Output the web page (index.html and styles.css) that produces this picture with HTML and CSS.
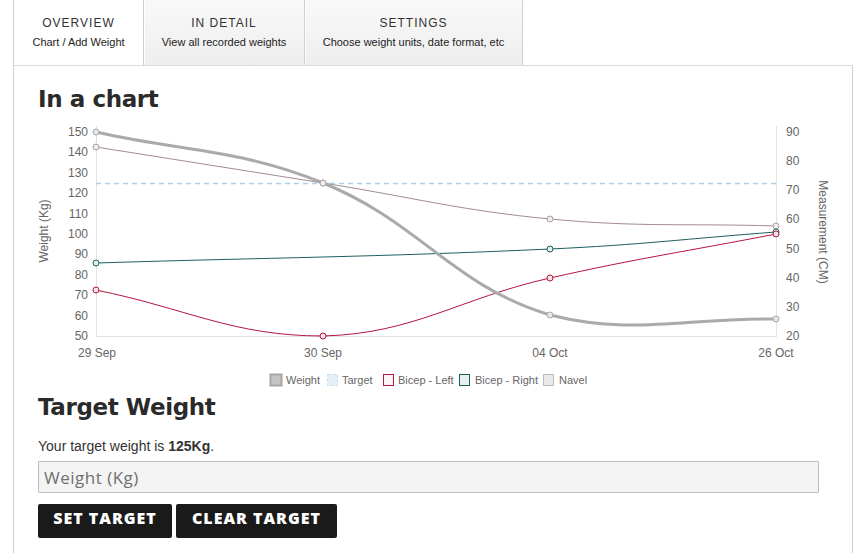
FILE: index.html
```html
<!DOCTYPE html>
<html lang="en">
<head>
  <meta charset="UTF-8">
  <title>Weight Tracker</title>
  <meta name="viewport" content="width=device-width, initial-scale=1.0">
  <link rel="stylesheet" href="styles.css">
</head>
<body>
  <div class="tabs">
    <div class="tab active">
      <div class="tab-title">OVERVIEW</div>
      <div class="tab-sub">Chart / Add Weight</div>
    </div>
    <div class="tab">
      <div class="tab-title">IN DETAIL</div>
      <div class="tab-sub">View all recorded weights</div>
    </div>
    <div class="tab wide">
      <div class="tab-title">SETTINGS</div>
      <div class="tab-sub">Choose weight units, date format, etc</div>
    </div>
  </div>

  <div class="panel">
    <h2>In a chart</h2>

    <svg class="chart" width="838" height="280" viewBox="14 113 838 280">
      <!-- axes -->
      <g stroke="#e2e2e2" stroke-width="1" fill="none">
        <line x1="96.5" y1="126" x2="96.5" y2="336.5"/>
        <line x1="776.5" y1="126" x2="776.5" y2="336.5"/>
        <line x1="96" y1="336.5" x2="777" y2="336.5"/>
      </g>

      <g class="tick" text-anchor="end">
        <text x="88" y="136">150</text>
        <text x="88" y="156.4">140</text>
        <text x="88" y="176.8">130</text>
        <text x="88" y="197.2">120</text>
        <text x="88" y="217.6">110</text>
        <text x="88" y="238">100</text>
        <text x="88" y="258.4">90</text>
        <text x="88" y="278.8">80</text>
        <text x="88" y="299.2">70</text>
        <text x="88" y="319.6">60</text>
        <text x="88" y="340">50</text>
      </g>
      <g class="tick" text-anchor="start">
        <text x="786" y="136">90</text>
        <text x="786" y="165.1">80</text>
        <text x="786" y="194.3">70</text>
        <text x="786" y="223.4">60</text>
        <text x="786" y="252.6">50</text>
        <text x="786" y="281.7">40</text>
        <text x="786" y="310.9">30</text>
        <text x="786" y="340">20</text>
      </g>
      <g class="tick" text-anchor="middle">
        <text x="97" y="357">29 Sep</text>
        <text x="323" y="357">30 Sep</text>
        <text x="550" y="357">04 Oct</text>
        <text x="776" y="357">26 Oct</text>
      </g>
      <text class="tick" text-anchor="middle" transform="translate(48 231) rotate(-90)">Weight (Kg)</text>
      <text class="tick" text-anchor="middle" transform="translate(819 232) rotate(90)">Measurement (CM)</text>

      <!-- target -->
      <line x1="96" y1="183.5" x2="776" y2="183.5" stroke="#a9d2e8" stroke-width="1.5" stroke-dasharray="5 4"/>

      <!-- navel -->
      <path d="M96 147 C186.8 161.4 232.2 168.6 323 183 C413.8 197.4 458.7 210.3 550 219 C639.9 227.5 685.6 223.2 776 226" fill="none" stroke="#a38c90" stroke-width="1"/>
      <!-- bicep right -->
      <path d="M96 263 C277.6 257.4 368.4 257.3 550 249 C640.4 244.9 685.6 238.8 776 232" fill="none" stroke="#1d5f60" stroke-width="1"/>
      <!-- bicep left -->
      <path d="M96 290 C186.8 308.4 232.7 336 323 336 C414.3 333.6 458.6 298.6 550 278 C639.8 257.8 685.6 251.6 776 234" fill="none" stroke="#b3163f" stroke-width="1"/>
      <!-- weight -->
      <path d="M96 132 C186.8 152.4 237.7 148.6 323 183 C419.3 221.8 452.6 285.8 550 315 C633.8 336 685.6 317.4 776 319" fill="none" stroke="#aaaaaa" stroke-width="3"/>

      <!-- points -->
      <g fill="#e6e6e6" stroke="#aaaaaa" stroke-width="1">
        <circle cx="96" cy="132" r="3"/>
        <circle cx="323" cy="183" r="3"/>
        <circle cx="550" cy="315" r="3"/>
        <circle cx="776" cy="319" r="3"/>
      </g>
      <g fill="#eeeeee" stroke="#a9a0a2" stroke-width="1">
        <circle cx="96" cy="147" r="3"/>
        <circle cx="323" cy="183" r="3"/>
        <circle cx="550" cy="219" r="3"/>
        <circle cx="776" cy="226" r="3"/>
      </g>
      <g fill="#e3eeee" stroke="#1d5f60" stroke-width="1">
        <circle cx="96" cy="263" r="3"/>
        <circle cx="550" cy="249" r="3"/>
        <circle cx="776" cy="232" r="3"/>
      </g>
      <g fill="#f6e3e8" stroke="#b3163f" stroke-width="1">
        <circle cx="96" cy="290" r="3"/>
        <circle cx="323" cy="336" r="3"/>
        <circle cx="550" cy="278" r="3"/>
        <circle cx="776" cy="234" r="3"/>
      </g>

      <!-- legend -->
      <g class="legend">
        <rect x="270.5" y="374.5" width="11" height="11" fill="#c4c4c4" stroke="#a6a6a6" stroke-width="2"/>
        <text x="286" y="383.5">Weight</text>
        <rect x="327.5" y="374.5" width="10" height="11" fill="#e3eff5" stroke="#c4dce9" stroke-width="1" stroke-dasharray="3 2"/>
        <text x="342" y="383.5">Target</text>
        <rect x="383.5" y="374.5" width="10" height="11" fill="#fdf4f6" stroke="#b3163f" stroke-width="1"/>
        <text x="398" y="383.5">Bicep - Left</text>
        <rect x="459.5" y="374.5" width="10" height="11" fill="#e7f0ef" stroke="#1d5f60" stroke-width="1"/>
        <text x="475" y="383.5">Bicep - Right</text>
        <rect x="543.5" y="374.5" width="10" height="11" fill="#e9e9e9" stroke="#bbbbbb" stroke-width="1"/>
        <text x="559" y="383.5">Navel</text>
      </g>
    </svg>

    <h2>Target Weight</h2>
    <p class="target-text">Your target weight is <b>125Kg</b>.</p>
    <input class="weight-input" type="text" placeholder="Weight (Kg)">
    <div class="actions">
      <button class="btn set">SET TARGET</button>
      <button class="btn clear">CLEAR TARGET</button>
    </div>
  </div>
</body>
</html>
```

FILE: styles.css
```css
body {
  font-family: "Liberation Sans", Arial, sans-serif;
  background: white;
  margin: 0;
  padding: 0;
  color: #333;
}

.tabs {
  display: flex;
  margin-left: 13px;
  height: 65px;
}

.tab {
  box-sizing: border-box;
  width: 161px;
  height: 65px;
  padding-top: 16px;
  text-align: center;
  background: linear-gradient(#f9f9f9, #eeeeee);
  border-right: 1px solid #cfcfcf;
  box-shadow: inset 1px 0 0 #ffffff;
}

.tab.active {
  width: 131px;
  background: white;
  border-left: 1px solid #cfcfcf;
  box-shadow: none;
}

.tab.wide {
  width: 218px;
}

.tab-title {
  font-size: 12px;
  line-height: 14px;
  letter-spacing: 1px;
  color: #333;
}

.tab-sub {
  margin-top: 5px;
  font-size: 11px;
  line-height: 14px;
  color: #222;
}

.panel {
  box-sizing: border-box;
  width: 840px;
  min-height: 488px;
  margin-left: 13px;
  padding: 0 34px 0 24px;
  border-left: 1px solid #cfcfcf;
  border-right: 1px solid #cfcfcf;
  border-top: 1px solid #dadada;
}

h2 {
  margin: 19px 0 0;
  font-family: "DejaVu Sans", "Liberation Sans", sans-serif;
  font-size: 23px;
  line-height: 28px;
  font-weight: bold;
  letter-spacing: -0.4px;
  color: #2a2a2a;
}

.chart {
  display: block;
  margin-left: -24px;
  font-family: "Liberation Sans", Arial, sans-serif;
}

.chart + h2 {
  margin-top: 0;
}

.tick {
  font-size: 12px;
  fill: #666;
}

.legend text {
  font-size: 11px;
  fill: #666;
}

.target-text {
  margin: 15px 0 0;
  font-size: 14px;
  line-height: 20px;
  color: #333;
}

.weight-input {
  display: block;
  box-sizing: border-box;
  width: 781px;
  height: 32px;
  margin-top: 5px;
  padding: 0 5px;
  font-family: "Open Sans", sans-serif;
  font-size: 17px;
  letter-spacing: 0.5px;
  background: #f4f4f4;
  border: 1px solid #bbbbbb;
  border-radius: 1px;
  color: #333;
}

.weight-input::placeholder {
  color: #6f6f6f;
}

.actions {
  display: flex;
  gap: 4px;
  margin-top: 11px;
}

.btn {
  height: 34px;
  padding: 0 0 7px;
  font-family: "Open Sans", sans-serif;
  font-size: 16px;
  font-weight: 800;
  letter-spacing: 1px;
  color: white;
  background: #1a1a1a;
  border: none;
  border-radius: 2px;
  cursor: pointer;
}

.btn.set {
  width: 134px;
}

.btn.clear {
  width: 161px;
}
```
